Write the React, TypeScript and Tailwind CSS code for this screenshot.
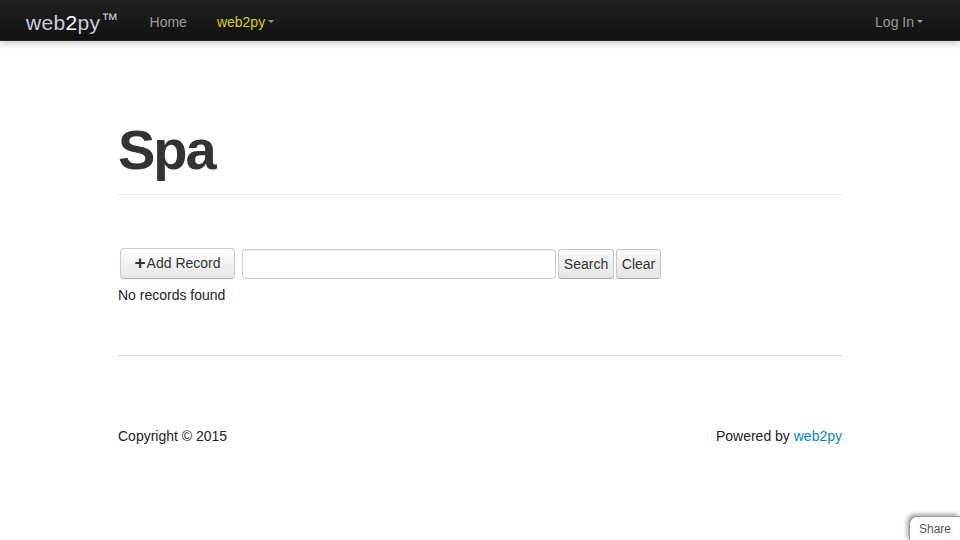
import React from "react";

export default function App() {
  return (
    <div className="min-h-[540px] bg-white relative overflow-hidden" style={{ fontFamily: '"Liberation Sans", Arial, sans-serif' }}>
      <div className="h-[41px] bg-gradient-to-b from-[#222222] to-[#111111] border-b border-[#252525] shadow-[0_1px_8px_rgba(0,0,0,0.3)] flex items-center justify-between pt-[4px]">
        <div className="flex items-center">
          <div className="ml-[26px] text-[21px] text-[#c8d0d6] leading-none tracking-[0.3px]">
            web<span className="text-white">2</span>py<span className="align-[5px] text-[17px] ml-[1px]">™</span>
          </div>
          <div className="ml-[31px] text-[14px] text-[#999999]">Home</div>
          <div className="ml-[30px] text-[14px] text-[#d4d400] flex items-center">
            web2py<span className="ml-[3px] inline-block w-0 h-0 border-l-[3px] border-r-[3px] border-t-[3px] border-l-transparent border-r-transparent border-t-[#999] mt-[-2px]"></span>
          </div>
        </div>
        <div className="mr-[37px] text-[14px] text-[#999999] flex items-center">
          Log In<span className="ml-[3px] inline-block w-0 h-0 border-l-[3px] border-r-[3px] border-t-[3px] border-l-transparent border-r-transparent border-t-[#999] mt-[-2px]"></span>
        </div>
      </div>

      <div className="w-[724px] mx-auto">
        <div className="pt-[78px] pb-[14px] border-b border-[#eeeeee]">
          <h1 className="text-[56px] font-bold text-[#333333] leading-[61px] tracking-[-2px]">Spa</h1>
        </div>

        <div className="mt-[52px] flex items-center">
          <button className="ml-[2px] h-[31px] w-[115px] flex items-center justify-center rounded-[4px] border border-[#cccccc] border-b-[#b3b3b3] bg-gradient-to-b from-white to-[#e6e6e6] text-[14px] text-[#333] pt-[1px] shadow-[inset_0_1px_0_rgba(255,255,255,0.2),0_1px_2px_rgba(0,0,0,0.05)]">
            <span className="font-bold text-[19px] leading-none mr-[1px] mt-[-2px]">+</span>Add Record
          </button>
          <input className="ml-[7px] mt-[2px] h-[30px] w-[314px] rounded-[4px] border border-[#cccccc] shadow-[inset_0_1px_1px_rgba(0,0,0,0.075)] outline-none" />
          <button className="ml-[2px] mt-[2px] h-[30px] w-[56px] rounded-[3px] border border-[#c8c8c8] border-b-[#aaa] bg-gradient-to-b from-[#fafafa] to-[#e4e4e4] text-[14px] text-[#333]">Search</button>
          <button className="ml-[2px] mt-[2px] h-[30px] w-[45px] rounded-[3px] border border-[#c8c8c8] border-b-[#aaa] bg-gradient-to-b from-[#fafafa] to-[#e4e4e4] text-[14px] text-[#333]">Clear</button>
        </div>
        <div className="mt-[6px] text-[14px] text-[#222] leading-[20px]">No records found</div>

        <div className="mt-[50px] border-t border-[#dddddd]"></div>

        <div className="mt-[70px] flex justify-between text-[14px] text-[#222] leading-[20px]">
          <div>Copyright © 2015</div>
          <div>Powered by <span className="text-[#0088cc]">web2py</span></div>
        </div>
      </div>

      <div className="absolute right-0 bottom-0 w-[51px] h-[24px] bg-white rounded-tl-[8px] border-l border-t border-[#999] shadow-[-2px_-2px_4px_rgba(0,0,0,0.35)] text-[12px] text-[#555] pl-[9px] pt-[3px]">Share</div>
    </div>
  );
}
